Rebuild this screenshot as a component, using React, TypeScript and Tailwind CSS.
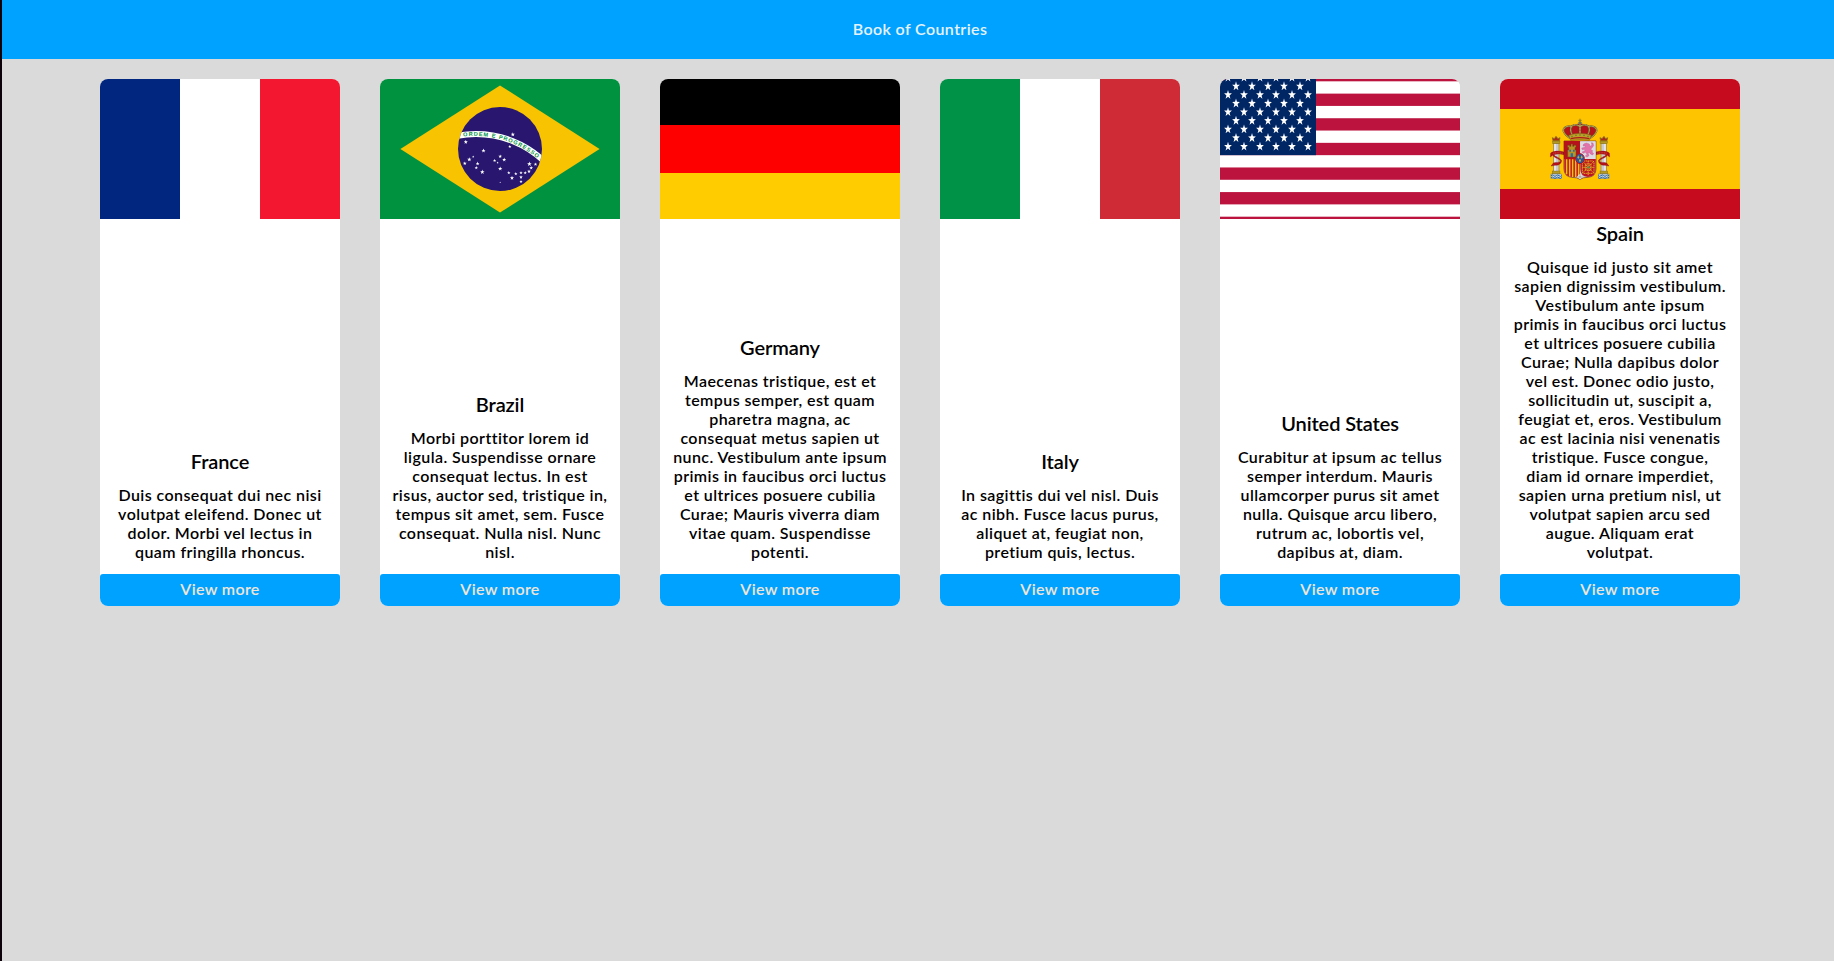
import type { ReactNode } from "react";

const FRAME = "block h-[140px] w-full shrink-0 rounded-t-lg";

function starPoints(cx: number, cy: number, rx: number, ry: number = rx) {
  return Array.from({ length: 10 }, (_, i) => {
    const k = i % 2 === 0 ? 1 : 0.4;
    const a = (Math.PI / 5) * i - Math.PI / 2;
    return `${(cx + rx * k * Math.cos(a)).toFixed(2)},${(cy + ry * k * Math.sin(a)).toFixed(2)}`;
  }).join(" ");
}

function VerticalFlag({ colors }: { colors: [string, string, string] }) {
  return (
    <svg viewBox="0 0 240 140" className={FRAME} aria-hidden="true">
      {colors.map((fill, i) => (
        <rect key={i} x={i * 80} width="80" height="140" fill={fill} />
      ))}
    </svg>
  );
}

function GermanyFlag() {
  return (
    <svg viewBox="0 0 240 140" className={FRAME} aria-hidden="true">
      <rect width="240" height="46" fill="#000" />
      <rect y="46" width="240" height="48" fill="#f00" />
      <rect y="94" width="240" height="46" fill="#fc0" />
    </svg>
  );
}

const BRAZIL_STARS: [number, number, number][] = [
  [132.8, 55.5, 2.2], [129.8, 67.6, 1.7], [85.8, 63, 2.2], [103.5, 71.6, 2.2],
  [89.3, 80.5, 2.3], [93.2, 77.7, 1.2], [84.8, 84.4, 2], [97.6, 84.6, 2],
  [96.3, 88.9, 1.8], [102.3, 93, 2.4], [120.2, 77.4, 1.9], [124.2, 80.7, 2.1],
  [114.6, 81.5, 1.7], [117.6, 83.7, 1.1], [120.2, 89.7, 2.3], [149.4, 85, 2.5],
  [155.5, 85.3, 1.9], [151.2, 88.9, 1.9], [149, 92.4, 1.9], [145.2, 93.9, 1.8],
  [141, 93.9, 1.8], [135.8, 94.8, 1.8], [128.8, 93.9, 1.8], [132, 99, 2.2],
  [141, 98.2, 1.9], [141, 102.6, 1.7], [120.2, 103.5, 0.9],
];

function BrazilFlag() {
  return (
    <svg viewBox="0 0 240 140" className={FRAME} aria-hidden="true">
      <defs>
        <clipPath id="globe">
          <circle cx="120" cy="70" r="42" />
        </clipPath>
        <path id="motto" d="M 82.4 57.75 A 97.2 97.2 0 0 1 160 81.5" />
      </defs>
      <rect width="240" height="140" fill="#00923f" />
      <path d="M20.4 70 120 6.4 219.6 70 120 133.6Z" fill="#f8c300" />
      <circle cx="120" cy="70" r="42" fill="#28166f" />
      <circle cx="96" cy="154" r="99" fill="none" stroke="#fff" strokeWidth="6" clipPath="url(#globe)" />
      <text fill="#00923f" fontSize="5.6" fontWeight="700" fontFamily="'Liberation Sans', sans-serif">
        <textPath href="#motto" startOffset="1" textLength="79">
          ORDEM E PROGRESSO
        </textPath>
      </text>
      {BRAZIL_STARS.map(([x, y, r]) => (
        <polygon key={`${x}-${y}`} points={starPoints(x, y, r)} fill="#fff" />
      ))}
    </svg>
  );
}

function UnitedStatesFlag() {
  const stripe = 160 / 13;
  const stars: [number, number][] = [];
  for (let row = 1; row <= 9; row++) {
    for (let col = row % 2 ? 1 : 2; col <= 11; col += 2) stars.push([col * 8, row * 8.615 - 10]);
  }
  return (
    <svg viewBox="0 0 240 140" className={FRAME} aria-hidden="true">
      <rect width="240" height="140" fill="#fff" />
      {[0, 2, 4, 6, 8, 10, 12].map((n) => (
        <rect key={n} y={n * stripe - 10} width="240" height={stripe} fill="#bb133e" />
      ))}
      <rect width="96" height="76.15" fill="#002664" />
      {stars.map(([x, y]) => (
        <polygon key={`${x}-${y}`} points={starPoints(x, y, 4.1, 4.9)} fill="#fff" />
      ))}
    </svg>
  );
}

function Pillar() {
  return (
    <g>
      <rect x="191" y="220" width="16" height="84" fill="#ccc9cf" stroke="#6f6a55" strokeWidth="1.5" />
      <rect x="193" y="221" width="4" height="82" fill="#f2f1f5" />
      <rect x="188" y="213" width="22" height="8" fill="#b59a26" stroke="#6b5a18" strokeWidth="1" />
      <path d="M189 212 187 203 193 206 198 199 204 206 210 203 208 212Z" fill="#aa2a1c" stroke="#8a6d12" strokeWidth="2.5" />
      <rect x="187" y="303" width="23" height="9" fill="#b59a26" stroke="#6b5a18" strokeWidth="1" />
      <rect x="183" y="312" width="32" height="14" fill="#d7dbe0" stroke="#5b6a72" strokeWidth="1.5" />
      <path d="M183 317q4-4 8 0t8 0 8 0 8 0M183 323q4-4 8 0t8 0 8 0 8 0" fill="none" stroke="#1f62a0" strokeWidth="3" />
      <path d="M222 246C208 242 192 242 182 249L181 261 188 256C194 264 207 267 212 272 211 279 198 276 190 279L183 288 195 286C206 287 217 279 214 270 208 263 195 259 192 254 202 250 214 252 222 254Z" fill="#b5121b" stroke="#741016" strokeWidth="1" />
      <path d="M190 250q14-3 28 0" fill="none" stroke="#d9873d" strokeWidth="1.5" strokeDasharray="3 2" />
    </g>
  );
}

function SpainArms() {
  return (
    <g transform="translate(-10 -9) scale(.33333)">
      <Pillar />
      <g transform="translate(540 0) scale(-1 1)">
        <Pillar />
      </g>
      <path d="M222 213H318V296Q318 320 294 322 278 322 270 328 262 322 246 322 222 320 222 296Z" fill="#ccc9cf" stroke="#6b2a1b" strokeWidth="2" />
      <rect x="222" y="213" width="48" height="54" fill="#b5121b" />
      <rect x="271" y="214" width="46" height="53" fill="#dedbe2" />
      <path d="M223 267H270V321H246Q223 319 223 296Z" fill="#c4161e" />
      <path d="M230 268V313M239 268V319M248 268V321M257 268V321M266 268V321" stroke="#efc11c" strokeWidth="4.5" />
      <path d="M271 267H317V296Q317 319 294 321 271 319 271 296Z" fill="#bd1520" />
      <g fill="none" stroke="#e0aa24" strokeWidth="3" strokeDasharray="4 1.5">
        <rect x="277" y="273" width="35" height="37" rx="5" />
        <rect x="286" y="282" width="17" height="19" />
        <path d="M277 273 312 310M312 273 277 310M294.500 273V316M277 292H312" />
      </g>
      <circle cx="295" cy="292" r="3.500" fill="#33a15b" />
      <path d="M233 261V240H236V232H233V226H239V229H243V222H248V229H252V226H258V232H255V240H258V261Z" fill="#b89422" stroke="#69511a" strokeWidth="1.500" />
      <path d="M242 261V250H249V261ZM238 239h5v6h-5zM249 239h5v6h-5z" fill="#276bb0" />
      <path d="M281 222 289 219 298 222 300 229 306 226 304 218 309 219 311 227 305 235 302 238 308 242 306 247 311 250 308 255 301 252 299 248 294 248 297 257 291 261 286 258 291 254 287 247 279 250 276 246 285 242 283 238 277 239 275 234 285 232 286 228 279 228Z" fill="#e373ab" stroke="#b15489" strokeWidth="1" />
      <ellipse cx="270" cy="266" rx="13" ry="15" fill="#2558a4" stroke="#b5121b" strokeWidth="3" />
      <path d="M265 257v9M275 257v9M270 267v9M262 262h6M272 262h6M267 272h6" stroke="#d8b83a" strokeWidth="2.500" />
      <path d="M260 321 270 311 280 321 270 327Z" fill="#eceae8" />
      <path d="M270 313v10M262 321h16" stroke="#6a6052" strokeWidth="1.500" />
      <path d="M240 207Q216 190 220 178 226 164 244 168 256 160 270 162 284 160 296 168 314 164 320 178 324 190 300 207Z" fill="#b5121b" />
      <g fill="none" stroke="#6f6326" strokeWidth="5.500">
        <path d="M240 205Q216 188 221 177 228 166 245 169M300 205Q324 188 319 177 312 166 295 169M250 200Q236 178 246 168 258 160 270 170 282 160 294 168 304 178 290 200M270 160V198" />
      </g>
      <g fill="none" stroke="#e2d386" strokeWidth="2.700" strokeDasharray="3 1.500">
        <path d="M240 205Q216 188 221 177 228 166 245 169M300 205Q324 188 319 177 312 166 295 169M250 200Q236 178 246 168 258 160 270 170 282 160 294 168 304 178 290 200M270 160V198" />
      </g>
      <path d="M236 196Q270 184 304 196L298 211Q270 206 242 211Z" fill="#c39b22" stroke="#6d551b" strokeWidth="1.500" />
      <path d="M242 206Q270 200 298 206" fill="none" stroke="#a81c1c" strokeWidth="3.500" />
      <path d="M244 199h4M256 196h4M268 195h4M280 196h4M292 199h4" stroke="#2c7f58" strokeWidth="3" />
      <circle cx="270" cy="159" r="4.500" fill="#5b7480" stroke="#8a741f" strokeWidth="1.500" />
      <path d="M270 146v10M265 151h10" stroke="#80752c" strokeWidth="2.500" />
    </g>
  );
}

function SpainFlag() {
  return (
    <svg viewBox="0 0 240 140" className={FRAME} aria-hidden="true">
      <rect width="240" height="140" fill="#c60b1e" />
      <rect y="30" width="240" height="80" fill="#ffc400" />
      <SpainArms />
    </svg>
  );
}

type Country = { name: string; flag: ReactNode; lines: string[] };

const COUNTRIES: Country[] = [
  {
    name: "France",
    flag: <VerticalFlag colors={["#00267f", "#ffffff", "#f31830"]} />,
    lines: ["Duis consequat dui nec nisi", "volutpat eleifend. Donec ut", "dolor. Morbi vel lectus in", "quam fringilla rhoncus."],
  },
  {
    name: "Brazil",
    flag: <BrazilFlag />,
    lines: ["Morbi porttitor lorem id", "ligula. Suspendisse ornare", "consequat lectus. In est", "risus, auctor sed, tristique in,", "tempus sit amet, sem. Fusce", "consequat. Nulla nisl. Nunc", "nisl."],
  },
  {
    name: "Germany",
    flag: <GermanyFlag />,
    lines: ["Maecenas tristique, est et", "tempus semper, est quam", "pharetra magna, ac", "consequat metus sapien ut", "nunc. Vestibulum ante ipsum", "primis in faucibus orci luctus", "et ultrices posuere cubilia", "Curae; Mauris viverra diam", "vitae quam. Suspendisse", "potenti."],
  },
  {
    name: "Italy",
    flag: <VerticalFlag colors={["#009246", "#ffffff", "#ce2b37"]} />,
    lines: ["In sagittis dui vel nisl. Duis", "ac nibh. Fusce lacus purus,", "aliquet at, feugiat non,", "pretium quis, lectus."],
  },
  {
    name: "United States",
    flag: <UnitedStatesFlag />,
    lines: ["Curabitur at ipsum ac tellus", "semper interdum. Mauris", "ullamcorper purus sit amet", "nulla. Quisque arcu libero,", "rutrum ac, lobortis vel,", "dapibus at, diam."],
  },
  {
    name: "Spain",
    flag: <SpainFlag />,
    lines: ["Quisque id justo sit amet", "sapien dignissim vestibulum.", "Vestibulum ante ipsum", "primis in faucibus orci luctus", "et ultrices posuere cubilia", "Curae; Nulla dapibus dolor", "vel est. Donec odio justo,", "sollicitudin ut, suscipit a,", "feugiat et, eros. Vestibulum", "ac est lacinia nisi venenatis", "tristique. Fusce congue,", "diam id ornare imperdiet,", "sapien urna pretium nisl, ut", "volutpat sapien arcu sed", "augue. Aliquam erat", "volutpat."],
  },
];

function CountryCard({ name, flag, lines }: Country) {
  return (
    <article className="flex w-60 flex-col rounded-lg bg-white text-center">
      {flag}
      <div className="mt-auto pb-[13px]">
        <h2 className="mb-3 text-[20px] leading-6 font-semibold tracking-[-0.1px]">{name}</h2>
        <p className="text-[16px] leading-[19px] font-semibold tracking-[0.42px] whitespace-nowrap">
          {lines.map((line) => (
            <span key={line} className="block">
              {line}
            </span>
          ))}
        </p>
      </div>
      <button className="h-8 w-full shrink-0 rounded-t-[3px] rounded-b-lg bg-[#00a2ff] pb-[3px] text-[16px] leading-[19px] font-semibold tracking-[0.35px] text-[#f0e6d8]">
        View more
      </button>
    </article>
  );
}

export default function App() {
  return (
    <div className="flex h-screen flex-col overflow-hidden border-l-2 border-[#0d0209] bg-[#dadada] font-[Lato,sans-serif] text-black">
      <header className="flex h-[59px] shrink-0 items-center justify-center bg-[#00a2ff] pb-0.5 pl-1 text-[16px] leading-[19px] font-semibold tracking-[0.4px] text-[#e6f3fd]">
        Book of Countries
      </header>
      <main className="flex h-[547px] shrink-0 gap-10 pt-5 pl-[98px]">
        {COUNTRIES.map((country) => (
          <CountryCard key={country.name} {...country} />
        ))}
      </main>
    </div>
  );
}
